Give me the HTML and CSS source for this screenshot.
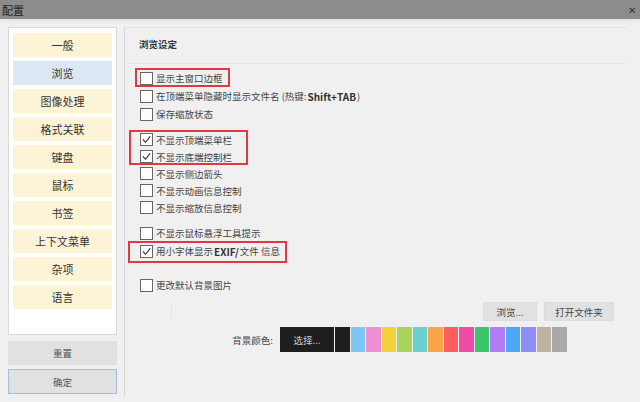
FILE: index.html
```html
<!DOCTYPE html>
<html lang="zh-CN">
<head>
    <meta charset="UTF-8">
    <meta name="viewport" content="width=device-width, initial-scale=1.0">
    <title>配置</title>
    <link rel="stylesheet" href="styles.css">
</head>
<body>
    <!-- 标题栏 -->
    <div class="titlebar">
        <span class="title">配置</span>
        <span class="close">&#x2715;</span>
    </div>

    <div class="main">
        <!-- 左侧分类 -->
        <div class="side">
            <ul class="menu">
                <li>一般</li>
                <li class="active">浏览</li>
                <li>图像处理</li>
                <li>格式关联</li>
                <li>键盘</li>
                <li>鼠标</li>
                <li>书签</li>
                <li>上下文菜单</li>
                <li>杂项</li>
                <li>语言</li>
            </ul>
            <button class="side-btn">重置</button>
            <button class="side-btn ok">确定</button>
        </div>

        <!-- 浏览设定 -->
        <div class="panel">
            <div class="panel-head">浏览设定</div>

            <div class="group first">
                <div class="mark mark-1">
                    <label class="row"><span class="box"></span>显示主窗口边框</label>
                </div>
                <label class="row"><span class="box"></span>在顶端菜单隐藏时显示文件名 (热键: <b>Shift+TAB</b>)</label>
                <label class="row"><span class="box"></span>保存缩放状态</label>
            </div>

            <div class="group tight">
                <div class="mark mark-2">
                    <label class="row"><span class="box checked"><svg viewBox="0 0 12 12"><polyline points="2,6 5,9 10,2.5"/></svg></span>不显示顶端菜单栏</label>
                    <label class="row"><span class="box checked"><svg viewBox="0 0 12 12"><polyline points="2,6 5,9 10,2.5"/></svg></span>不显示底端控制栏</label>
                </div>
                <label class="row"><span class="box"></span>不显示侧边箭头</label>
                <label class="row"><span class="box"></span>不显示动画信息控制</label>
                <label class="row"><span class="box"></span>不显示缩放信息控制</label>
            </div>

            <div class="group">
                <label class="row"><span class="box"></span>不显示鼠标悬浮工具提示</label>
                <div class="mark mark-3">
                    <label class="row"><span class="box checked"><svg viewBox="0 0 12 12"><polyline points="2,6 5,9 10,2.5"/></svg></span>用小字体显示 <b>EXIF/</b>文件 信息</label>
                </div>
            </div>

            <div class="group last">
                <label class="row"><span class="box"></span>更改默认背景图片</label>
            </div>

            <div class="file-row">
                <span class="path"></span>
                <button class="btn">浏览...</button>
                <button class="btn wide">打开文件夹</button>
            </div>

            <div class="color-row">
                <span class="color-label">背景颜色:</span>
                <button class="pick">选择...</button>
                <div class="swatches" id="swatches"></div>
            </div>
        </div>
    </div>

    <script>
        // 背景颜色色块
        var colors = ['#1e1e1e', '#7ec6f6', '#f08fd2', '#f2d23c', '#a8d45c', '#6acfcf',
            '#fba54a', '#fa5f60', '#f04aa6', '#3dc56b', '#b17df5', '#4ba8f7',
            '#8e8df7', '#bdb1a1', '#a9a9a7'];
        var box = document.getElementById('swatches');
        for (var i = 0; i < colors.length; i++) {
            var s = document.createElement('span');
            s.className = 'swatch';
            s.style.background = colors[i];
            box.appendChild(s);
        }
    </script>
</body>
</html>
```

FILE: styles.css
```css
body {
    font-family: "Noto Sans CJK SC", "Noto Sans", sans-serif;
    background-color: #f0f0f0;
    color: #333;
    margin: 0;
    padding: 0;
    width: 640px;
    height: 402px;
    overflow: hidden;
}
.titlebar {
    height: 19px;
    background-color: #8c8c8c;
    display: flex;
    align-items: center;
    justify-content: space-between;
    padding: 0 4px 0 2px;
    box-shadow: 0 2px 3px #e2e2e2;
}
.title {
    font-size: 11px;
    color: #1c1c1c;
}
.close {
    font-size: 10px;
    color: #333;
}
.main {
    display: flex;
    gap: 7px;
    padding: 8px 13px 0 8px;
}
.side {
    width: 109px;
    display: flex;
    flex-direction: column;
}
.menu {
    list-style: none;
    margin: 0;
    padding: 5px 4px 0;
    height: 301px;
    background-color: #fff;
    border: 1px solid #d8d8d8;
    display: flex;
    flex-direction: column;
    gap: 4px;
}
.menu li {
    height: 24px;
    line-height: 24px;
    text-align: center;
    font-size: 11px;
    background-color: #fdf4d8;
    color: #333;
}
.menu li.active {
    background-color: #dde7f4;
}
.side-btn {
    font-family: inherit;
    height: 24px;
    margin-top: 6px;
    border: 1px solid #e1e1e1;
    background-color: #e1e1e1;
    font-size: 9.5px;
    color: #555;
    padding: 0;
}
.side-btn.ok {
    margin-top: 4px;
    height: 25px;
    border-color: #a6bfd8;
}
.panel {
    flex: 1;
    height: 368px;
    border-left: 1px solid #d6d6d6;
    border-top: 1px solid #e2e2e2;
    display: flex;
    flex-direction: column;
}
.panel-head {
    height: 35px;
    line-height: 33px;
    padding-left: 14px;
    font-size: 9.5px;
    font-weight: 600;
    color: #333;
    border-bottom: 1px solid #e6e6e6;
}
.group {
    margin-top: 8px;
}
.group.first {
    margin-top: 5px;
}
.group.last {
    margin-top: 16px;
}
.row {
    display: flex;
    align-items: center;
    height: 18px;
    padding-left: 15px;
    font-size: 9.5px;
    color: #444;
}
.group.tight .row {
    height: 17px;
}
.row b {
    font-weight: 600;
    font-size: 10px;
    color: #333;
    margin: 0 1px;
}
.box {
    width: 11px;
    height: 11px;
    border: 1px solid #666;
    background-color: #fff;
    margin-right: 3px;
    flex: none;
}
.box svg {
    display: block;
    width: 11px;
    height: 11px;
}
.box polyline {
    fill: none;
    stroke: #333;
    stroke-width: 1.2;
}
.mark {
    position: relative;
}
.mark::after {
    content: "";
    position: absolute;
    border: 2px solid #e03a40;
    box-sizing: border-box;
}
.mark-1::after {
    left: 10px;
    top: -1px;
    width: 95px;
    height: 19px;
}
.mark-2::after {
    left: 4px;
    top: -1px;
    width: 119px;
    height: 35px;
}
.mark-3::after {
    left: 3px;
    top: -1px;
    width: 159px;
    height: 22px;
}
.file-row {
    display: flex;
    justify-content: flex-end;
    align-items: center;
    gap: 7px;
    margin-top: 8px;
    padding-right: 13px;
    position: relative;
}
.path {
    width: 1px;
    height: 15px;
    background-color: #e4e4e4;
    margin-right: auto;
    margin-left: 46px;
}
.btn {
    font-family: inherit;
    height: 19px;
    width: 54px;
    padding: 0;
    border: 1px solid #dcdcdc;
    background-color: #e1e1e1;
    font-size: 9.5px;
    color: #444;
}
.btn.wide {
    width: 70px;
}
.color-row {
    display: flex;
    align-items: center;
    margin-top: 6px;
    height: 25px;
}
.color-label {
    width: 148px;
    text-align: right;
    margin-right: 7px;
    font-size: 9.5px;
    color: #444;
}
.pick {
    font-family: inherit;
    width: 54px;
    height: 25px;
    padding: 0;
    border: none;
    background-color: #1e1e1e;
    color: #d0d0d0;
    font-size: 9.5px;
}
.swatches {
    display: flex;
    height: 25px;
}
.swatch {
    width: 14.5px;
    height: 25px;
    margin-left: 1px;
}
```
